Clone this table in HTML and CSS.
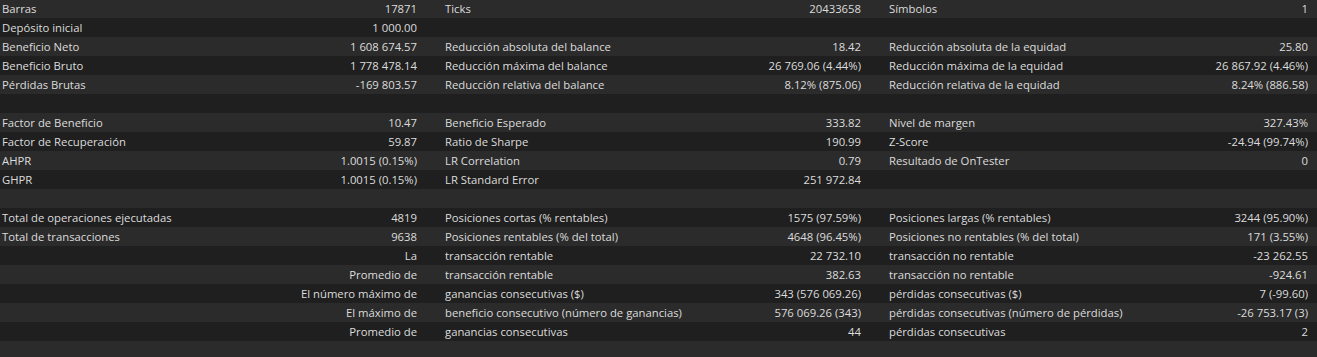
FILE: index.html
```html
<!DOCTYPE html>
<html lang="es">
<head>
<meta charset="utf-8">
<title>Informe</title>
<link rel="stylesheet" href="styles.css">
</head>
<body>
<div class="report">
  <div class="row"><div class="cell"><span>Barras</span><span>17871</span></div><div class="cell"><span>Ticks</span><span>20433658</span></div><div class="cell"><span>Símbolos</span><span>1</span></div></div>
  <div class="row"><div class="cell"><span>Depósito inicial</span><span>1 000.00</span></div><div class="cell"></div><div class="cell"></div></div>
  <div class="row"><div class="cell"><span>Beneficio Neto</span><span>1 608 674.57</span></div><div class="cell"><span>Reducción absoluta del balance</span><span>18.42</span></div><div class="cell"><span>Reducción absoluta de la equidad</span><span>25.80</span></div></div>
  <div class="row"><div class="cell"><span>Beneficio Bruto</span><span>1 778 478.14</span></div><div class="cell"><span>Reducción máxima del balance</span><span>26 769.06 (4.44%)</span></div><div class="cell"><span>Reducción máxima de la equidad</span><span>26 867.92 (4.46%)</span></div></div>
  <div class="row"><div class="cell"><span>Pérdidas Brutas</span><span>-169 803.57</span></div><div class="cell"><span>Reducción relativa del balance</span><span>8.12% (875.06)</span></div><div class="cell"><span>Reducción relativa de la equidad</span><span>8.24% (886.58)</span></div></div>
  <div class="row"><div class="cell"></div><div class="cell"></div><div class="cell"></div></div>
  <div class="row"><div class="cell"><span>Factor de Beneficio</span><span>10.47</span></div><div class="cell"><span>Beneficio Esperado</span><span>333.82</span></div><div class="cell"><span>Nivel de margen</span><span>327.43%</span></div></div>
  <div class="row"><div class="cell"><span>Factor de Recuperación</span><span>59.87</span></div><div class="cell"><span>Ratio de Sharpe</span><span>190.99</span></div><div class="cell"><span>Z-Score</span><span>-24.94 (99.74%)</span></div></div>
  <div class="row"><div class="cell"><span>AHPR</span><span>1.0015 (0.15%)</span></div><div class="cell"><span>LR Correlation</span><span>0.79</span></div><div class="cell"><span>Resultado de OnTester</span><span>0</span></div></div>
  <div class="row"><div class="cell"><span>GHPR</span><span>1.0015 (0.15%)</span></div><div class="cell"><span>LR Standard Error</span><span>251 972.84</span></div><div class="cell"></div></div>
  <div class="row"><div class="cell"></div><div class="cell"></div><div class="cell"></div></div>
  <div class="row"><div class="cell"><span>Total de operaciones ejecutadas</span><span>4819</span></div><div class="cell"><span>Posiciones cortas (% rentables)</span><span>1575 (97.59%)</span></div><div class="cell"><span>Posiciones largas (% rentables)</span><span>3244 (95.90%)</span></div></div>
  <div class="row"><div class="cell"><span>Total de transacciones</span><span>9638</span></div><div class="cell"><span>Posiciones rentables (% del total)</span><span>4648 (96.45%)</span></div><div class="cell"><span>Posiciones no rentables (% del total)</span><span>171 (3.55%)</span></div></div>
  <div class="row"><div class="cell"><span></span><span>La</span></div><div class="cell"><span>transacción rentable</span><span>22 732.10</span></div><div class="cell"><span>transacción no rentable</span><span>-23 262.55</span></div></div>
  <div class="row"><div class="cell"><span></span><span>Promedio de</span></div><div class="cell"><span>transacción rentable</span><span>382.63</span></div><div class="cell"><span>transacción no rentable</span><span>-924.61</span></div></div>
  <div class="row"><div class="cell"><span></span><span>El número máximo de</span></div><div class="cell"><span>ganancias consecutivas ($)</span><span>343 (576 069.26)</span></div><div class="cell"><span>pérdidas consecutivas ($)</span><span>7 (-99.60)</span></div></div>
  <div class="row"><div class="cell"><span></span><span>El máximo de</span></div><div class="cell"><span>beneficio consecutivo (número de ganancias)</span><span>576 069.26 (343)</span></div><div class="cell"><span>pérdidas consecutivas (número de pérdidas)</span><span>-26 753.17 (3)</span></div></div>
  <div class="row"><div class="cell"><span></span><span>Promedio de</span></div><div class="cell"><span>ganancias consecutivas</span><span>44</span></div><div class="cell"><span>pérdidas consecutivas</span><span>2</span></div></div>
  <div class="row"><div class="cell"></div><div class="cell"></div><div class="cell"></div></div>
</div>
</body>
</html>
```
FILE: styles.css
```css
html, body {
  margin: 0;
  padding: 0;
  background: #1f1f1f;
  overflow: hidden;
}
.report {
  margin-top: -1px;
  font-family: "Open Sans", "Noto Sans", "Liberation Sans", sans-serif;
  font-size: 11.3px;
  color: #dcdcdc;
}
.row {
  display: grid;
  grid-template-columns: 443px 444px 1fr;
  height: 19px;
  line-height: 19px;
  background: #2b2b2b;
}
.row:nth-child(even) {
  background: #1f1f1f;
}
.cell {
  display: flex;
  justify-content: space-between;
  padding: 0 26px 0 2px;
  white-space: nowrap;
}
.cell:last-child {
  padding-right: 9px;
}
```
